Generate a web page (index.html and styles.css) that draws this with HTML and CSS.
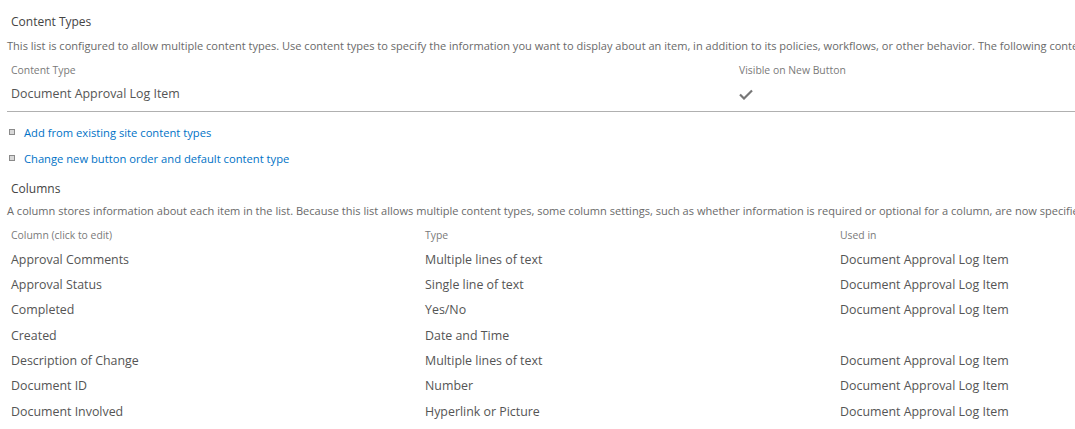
FILE: index.html
```html
<!DOCTYPE html>
<html lang="en">
<head>
    <meta charset="UTF-8">
    <title>List Settings</title>
    <link rel="stylesheet" href="styles.css">
</head>
<body>

    <div class="page">
        <h3 class="section-title">Content Types</h3>
        <p class="section-desc">This list is configured to allow multiple content types. Use content types to specify the information you want to display about an item, in addition to its policies, workflows, or other behavior. The following content types are currently available in this list:</p>

        <div class="ct-table">
            <div class="th">Content Type</div>
            <div class="th">Visible on New Button</div>
            <div class="td">Document Approval Log Item</div>
            <div class="td">
                <svg class="check" width="14" height="11" viewBox="0 0 14 11">
                    <path d="M1 5.5 L5 9.5 L13 1.5" fill="none" stroke="#777" stroke-width="2.2"/>
                </svg>
            </div>
        </div>

        <hr class="divider">

        <ul class="links">
            <li><a href="#">Add from existing site content types</a></li>
            <li><a href="#">Change new button order and default content type</a></li>
        </ul>

        <h3 class="section-title cols-title">Columns</h3>
        <p class="section-desc">A column stores information about each item in the list. Because this list allows multiple content types, some column settings, such as whether information is required or optional for a column, are now specified by the content type of the item. The following columns are currently available in this list:</p>

        <div class="col-table">
            <div class="th">Column (click to edit)</div>
            <div class="th">Type</div>
            <div class="th">Used in</div>

            <div class="td">Approval Comments</div>
            <div class="td">Multiple lines of text</div>
            <div class="td">Document Approval Log Item</div>

            <div class="td">Approval Status</div>
            <div class="td">Single line of text</div>
            <div class="td">Document Approval Log Item</div>

            <div class="td">Completed</div>
            <div class="td">Yes/No</div>
            <div class="td">Document Approval Log Item</div>

            <div class="td">Created</div>
            <div class="td">Date and Time</div>
            <div class="td"></div>

            <div class="td">Description of Change</div>
            <div class="td">Multiple lines of text</div>
            <div class="td">Document Approval Log Item</div>

            <div class="td">Document ID</div>
            <div class="td">Number</div>
            <div class="td">Document Approval Log Item</div>

            <div class="td">Document Involved</div>
            <div class="td">Hyperlink or Picture</div>
            <div class="td">Document Approval Log Item</div>
        </div>
    </div>

</body>
</html>
```

FILE: styles.css
```css
body {
    font-family: "Open Sans", "Noto Sans", sans-serif;
    margin: 0;
    padding: 0;
    background: white;
    color: #555;
    overflow: hidden;
}
.page {
    padding: 12px 0 0 7px;
    white-space: nowrap;
}
.section-title {
    margin: 0 0 2px 4px;
    font-size: 12px;
    font-weight: normal;
    line-height: 20px;
    color: #444;
}
.cols-title {
    margin-top: 8px;
    margin-bottom: 0;
}
.section-desc {
    margin: 0;
    font-size: 11.05px;
    line-height: 24px;
    color: #6a6a6a;
}
.ct-table {
    display: grid;
    grid-template-columns: 728px 1fr;
    padding-left: 4px;
}
.col-table {
    display: grid;
    grid-template-columns: 414px 415px 1fr;
    grid-template-rows: 23.6px;
    grid-auto-rows: 25.33px;
    padding-left: 4px;
}
.th {
    font-size: 10.4px;
    line-height: 24px;
    color: #7a7a7a;
}
.td {
    font-size: 12.4px;
    line-height: 24px;
    color: #555;
}
.col-table .td {
    line-height: 25.33px;
}
.col-table .th {
    line-height: 24px;
}
.check {
    display: block;
    margin-top: 7px;
}
.divider {
    margin: 5px 0 0 0;
    border: none;
    border-top: 1px solid #b0b0b0;
    height: 0;
}
.links {
    list-style: none;
    margin: 7px 0 0 0;
    padding: 0;
}
.links li {
    display: flex;
    align-items: center;
    height: 26px;
}
.links li::before {
    content: "";
    width: 4px;
    height: 4px;
    border: 1px solid #8a8a8a;
    background: #d8d8d8;
    margin: 0 9px 0 2px;
}
.links a {
    font-size: 11.2px;
    color: #0072c6;
    text-decoration: none;
}
```
